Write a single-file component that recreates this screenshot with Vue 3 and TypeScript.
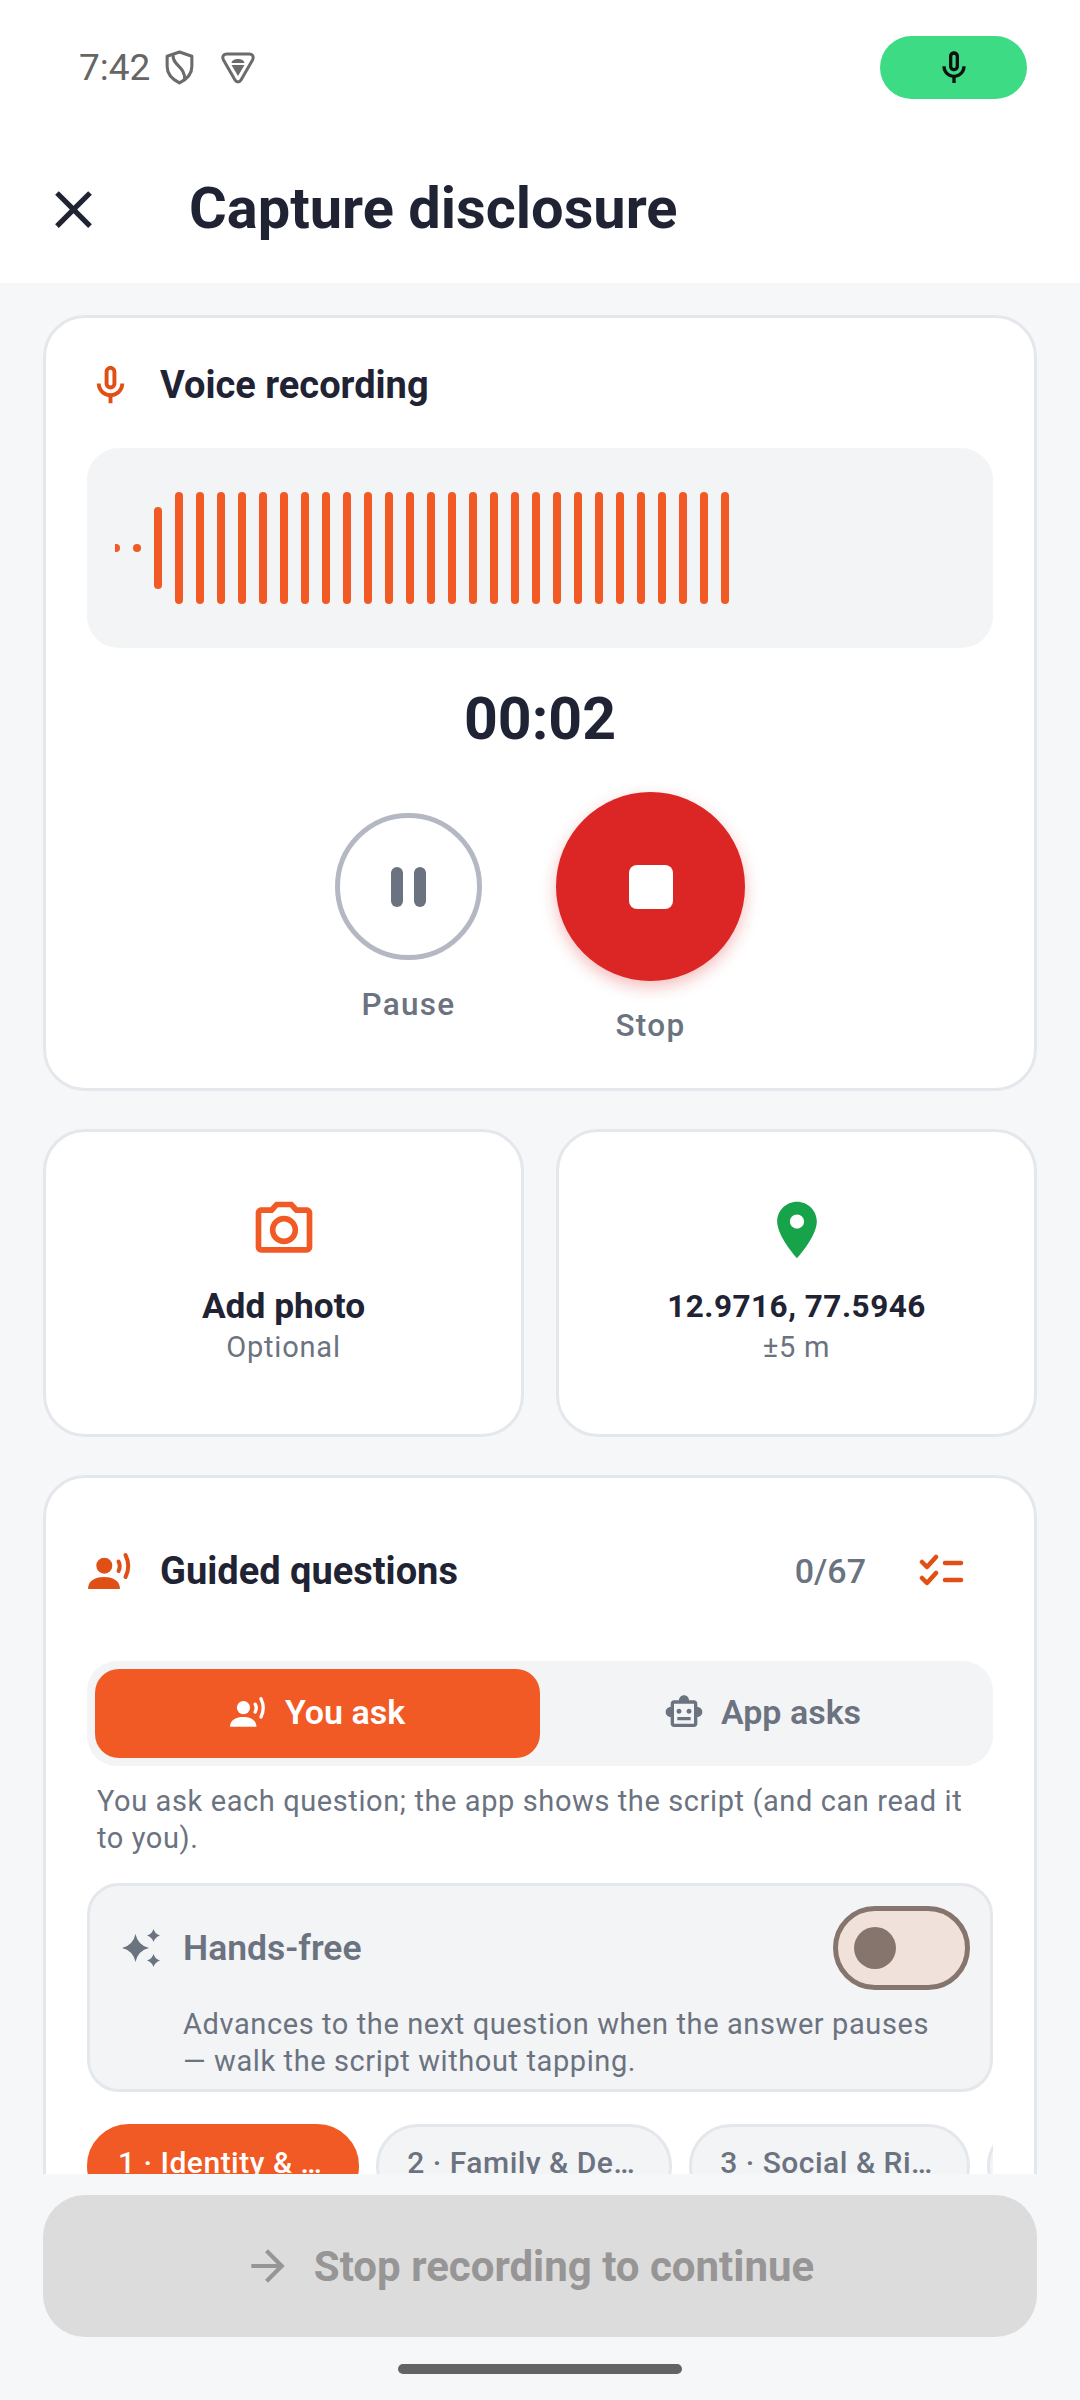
<script setup lang="ts">
// waveform: 2 quiet samples, one ramping up, then full level
const bars = [8, 8, 82, ...Array(27).fill(112)]
const chips = ['1 · Identity & …', '2 · Family & De…', '3 · Social & Ri…', '4']
const micPath = 'M12 14c1.660 0 3-1.340 3-3V5c0-1.660-1.340-3-3-3S9 3.340 9 5v6c0 1.660 1.340 3 3 3zm-1-9c0-.55.45-1 1-1s1 .45 1 1v6c0 .55-.45 1-1 1s-1-.45-1-1V5zm6 6c0 2.760-2.240 5-5 5s-5-2.240-5-5H5c0 3.530 2.610 6.430 6 6.920V21h2v-3.080c3.390-.49 6-3.390 6-6.920h-2z'
</script>

<template>
  <div class="screen">
    <div class="status-bar">
      <span class="time">7:42</span>
      <svg class="st-shield" viewBox="0 0 28 34" fill="none" stroke="#6b6b6b" stroke-width="3">
        <path d="M14 2 L26 6 V16 C26 24 20 29 14 32 C8 29 2 24 2 16 V6 Z" stroke-linejoin="round" />
        <path d="M8 5 C6 14 20 16 19 29" />
      </svg>
      <svg class="st-vpn" viewBox="0 0 34 32" fill="none">
        <path d="M6 2 H28 C32 2 33 5 31.500 8 L20 28 C18.500 30.500 15.500 30.500 14 28 L2.500 8 C1 5 2 2 6 2 Z" stroke="#6b6b6b" stroke-width="3" />
        <path d="M10.500 11 C11 5.500 23 5.500 23.500 11 Z M10.500 13 H23.500 L17 24 Z" fill="#6b6b6b" />
      </svg>
      <div class="mic-pill">
        <svg viewBox="0 0 24 24" class="pill-icon"><path fill="#111" :d="micPath" /></svg>
      </div>
    </div>

    <header class="app-bar">
      <svg class="close" viewBox="0 0 24 24"><path d="M19 6.410 17.590 5 12 10.590 6.410 5 5 6.410 10.590 12 5 17.590 6.410 19 12 13.410 17.590 19 19 17.590 13.410 12z" fill="#1f2333" /></svg>
      <h1>Capture disclosure</h1>
    </header>

    <main class="content">
      <section class="card voice">
        <div class="card-head">
          <svg viewBox="0 0 24 24" class="head-icon"><path fill="#e04f16" :d="micPath" /></svg>
          <span class="card-title">Voice recording</span>
        </div>
        <div class="wave">
          <div class="wave-inner">
            <span v-for="(h, i) in bars" :key="i" class="bar" :style="{ height: h + 'px' }"></span>
          </div>
        </div>
        <div class="timer">00:02</div>
        <div class="controls">
          <div class="control">
            <button class="pause"><span></span><span></span></button>
            <span class="control-label">Pause</span>
          </div>
          <div class="control">
            <button class="stop"><span></span></button>
            <span class="control-label">Stop</span>
          </div>
        </div>
      </section>

      <div class="tiles">
        <div class="card tile">
          <svg viewBox="0 0 24 24" class="tile-icon"><path fill="#f15a24" d="M20 4h-3.170L15 2H9L7.170 4H4c-1.100 0-2 .9-2 2v12c0 1.100.9 2 2 2h16c1.100 0 2-.9 2-2V6c0-1.100-.9-2-2-2zm0 14H4V6h4.050l1.830-2h4.240l1.830 2H20v12zM12 7c-2.760 0-5 2.240-5 5s2.240 5 5 5 5-2.240 5-5-2.240-5-5-5zm0 8c-1.650 0-3-1.350-3-3s1.350-3 3-3 3 1.350 3 3-1.350 3-3 3z" /></svg>
          <span class="tile-title">Add photo</span>
          <span class="tile-sub">Optional</span>
        </div>
        <div class="card tile">
          <svg viewBox="0 0 24 24" class="tile-icon"><path fill="#16a34a" d="M12 2C8.130 2 5 5.130 5 9c0 5.250 7 13 7 13s7-7.750 7-13c0-3.870-3.130-7-7-7zm0 9.500c-1.380 0-2.500-1.120-2.500-2.500s1.120-2.500 2.500-2.500 2.500 1.120 2.500 2.500-1.120 2.500-2.500 2.500z" /></svg>
          <span class="tile-coords">12.9716, 77.5946</span>
          <span class="tile-sub">±5 m</span>
        </div>
      </div>

      <section class="card guided">
        <div class="guided-head">
          <svg viewBox="0 0 46 38" class="guided-icon">
            <circle cx="16.300" cy="13.700" r="8" fill="currentColor" />
            <path d="M0 37 C0 28 8 25 16 25 C24 25 32 28 32 37 Z" fill="currentColor" />
            <path d="M30.500 9.500 Q33 14 30.500 19 M37.500 3 Q43 14 37.500 25" fill="none" stroke="currentColor" stroke-width="4" stroke-linecap="round" />
          </svg>
          <span class="card-title guided-title">Guided questions</span>
          <span class="count">0/67</span>
          <svg viewBox="0 0 46 36" class="check-icon" fill="none" stroke="#e04f16" stroke-width="4.500" stroke-linecap="round" stroke-linejoin="round">
            <path d="M3 9 L8 14 L17 4 M3 25 L8 30 L17 20 M26 10 H42 M26 27 H42" />
          </svg>
        </div>

        <div class="segments">
          <div class="segment active">
            <svg viewBox="0 0 46 38" class="seg-voice">
              <circle cx="16.300" cy="13.700" r="8" fill="currentColor" />
              <path d="M0 37 C0 28 8 25 16 25 C24 25 32 28 32 37 Z" fill="currentColor" />
              <path d="M30.500 9.500 Q33 14 30.500 19 M37.500 3 Q43 14 37.500 25" fill="none" stroke="currentColor" stroke-width="4" stroke-linecap="round" />
            </svg>
            You ask
          </div>
          <div class="segment">
            <svg viewBox="0 0 24 24" class="seg-icon"><path fill="#6b7280" d="M20 9V7c0-1.100-.9-2-2-2h-3c0-1.660-1.340-3-3-3S9 3.340 9 5H6c-1.100 0-2 .9-2 2v2c-1.660 0-3 1.340-3 3s1.340 3 3 3v4c0 1.100.9 2 2 2h12c1.100 0 2-.9 2-2v-4c1.660 0 3-1.340 3-3s-1.340-3-3-3zm-2 10H6V7h12v12zm-9-6c-.83 0-1.500-.67-1.500-1.500S8.170 10 9 10s1.500.67 1.500 1.500S9.830 13 9 13zm7.500-1.500c0 .83-.67 1.500-1.500 1.500s-1.500-.67-1.500-1.500.67-1.500 1.500-1.500 1.500.67 1.500 1.500zM8 15h8v2H8v-2z" /></svg>
            App asks
          </div>
        </div>
        <p class="hint">You ask each question; the app shows the script (and can read it to you).</p>

        <div class="hands-free">
          <div class="hf-row">
            <svg viewBox="0 0 42 42" class="hf-icon">
              <path fill="#6b7280" d="M13.500 7 Q16 18.500 27 21 Q16 23.500 13.500 35 Q11 23.500 0 21 Q11 18.500 13.500 7Z M31.500 2 Q33 7 38 8.500 Q33 10 31.500 15 Q30 10 25 8.500 Q30 7 31.500 2Z M31.500 27 Q33 32 38 33.500 Q33 35 31.500 40 Q30 35 25 33.500 Q30 32 31.500 27Z" />
            </svg>
            <span class="hf-title">Hands-free</span>
            <div class="toggle"><span class="thumb"></span></div>
          </div>
          <p class="hf-desc">Advances to the next question when the answer pauses — walk the script without tapping.</p>
        </div>

        <div class="chips">
          <span v-for="(c, i) in chips" :key="c" class="chip" :class="{ on: i === 0 }">{{ c }}</span>
        </div>
      </section>
    </main>

    <footer class="footer">
      <div class="continue">
        <svg viewBox="0 0 24 24" class="arrow"><path fill="#979595" d="M12 4l-1.410 1.410L16.170 11H4v2h12.170l-5.580 5.590L12 20l8-8z" /></svg>
        Stop recording to continue
      </div>
      <div class="home-bar"></div>
    </footer>
  </div>
</template>

<style scoped>
.screen {
  width: 1080px;
  height: 2400px;
  display: flex;
  flex-direction: column;
  overflow: hidden;
  background: #f6f7f9;
  font-family: Roboto, "Liberation Sans", sans-serif;
  color: #1f2333;
}

.status-bar {
  height: 135px;
  flex: none;
  display: flex;
  align-items: center;
  padding: 0 53px 0 79px;
  background: #fff;
  box-sizing: border-box;
}

.time {
  font-size: 37px;
  color: #666;
}

.st-shield {
  width: 29px;
  height: 35px;
  margin-left: 15px;
}

.st-vpn {
  width: 34px;
  height: 32px;
  margin-left: 27px;
}

.mic-pill {
  margin-left: auto;
  width: 147px;
  height: 63px;
  border-radius: 32px;
  background: #3ddc84;
  display: flex;
  align-items: center;
  justify-content: center;
}

.pill-icon {
  width: 40px;
  height: 40px;
}

.app-bar {
  height: 148px;
  flex: none;
  display: flex;
  align-items: center;
  background: #fff;
  padding-left: 42px;
  box-sizing: border-box;
}

.close {
  width: 63px;
  height: 63px;
}

h1 {
  margin: 0 0 2px 84px;
  font-size: 57.750px;
  font-weight: 700;
}

.content {
  flex: 1;
  min-height: 0;
  overflow: hidden;
  padding: 32px 43px 0;
  box-sizing: border-box;
}

.card {
  background: #fff;
  border: 3px solid #e4e7ec;
  border-radius: 42px;
  box-sizing: border-box;
}

.voice {
  height: 776px;
  padding: 0 41px;
}

.card-head {
  height: 130px;
  padding-top: 4px;
  box-sizing: border-box;
  display: flex;
  align-items: center;
}

.head-icon {
  width: 47px;
  height: 47px;
}

.card-title {
  font-size: 38px;
  font-weight: 700;
  margin-left: 26px;
}

.wave {
  height: 200px;
  border-radius: 32px;
  background: #f3f4f6;
  padding: 0 28px;
  display: flex;
  align-items: center;
}

.wave-inner {
  flex: 1;
  overflow: hidden;
  display: flex;
  align-items: center;
  gap: 13.125px;
  height: 112px;
}

.bar {
  flex: none;
  width: 7.875px;
  border-radius: 4px;
  background: #f15a24;
}

.bar:first-child {
  margin-left: -3px;
}

.timer {
  margin-top: 38px;
  text-align: center;
  font-size: 59px;
  font-weight: 700;
  line-height: 66px;
}

.controls {
  display: flex;
  justify-content: center;
  align-items: center;
  gap: 74px;
  margin-top: 40px;
}

.control {
  display: flex;
  flex-direction: column;
  align-items: center;
  gap: 26px;
}

.control-label {
  font-size: 31.500px;
  font-weight: 500;
  letter-spacing: 1.300px;
  color: #6b7280;
  line-height: 38px;
}

button {
  padding: 0;
  border-radius: 50%;
  display: flex;
  align-items: center;
  justify-content: center;
}

.pause {
  width: 147px;
  height: 147px;
  border: 5px solid #b4b8c2;
  background: #fff;
  gap: 11px;
}

.pause span {
  width: 12px;
  height: 40px;
  border-radius: 6px;
  background: #6b7280;
}

.stop {
  width: 189px;
  height: 189px;
  border: none;
  background: #dc2626;
  box-shadow: 0 6px 16px rgba(220, 38, 38, 0.3);
}

.stop span {
  width: 44px;
  height: 44px;
  border-radius: 8px;
  background: #fff;
}

.tiles {
  display: grid;
  grid-template-columns: 1fr 1fr;
  gap: 32px;
  margin-top: 38px;
}

.tile {
  height: 308px;
  display: flex;
  flex-direction: column;
  align-items: center;
  padding-top: 64px;
}

.tile-icon {
  width: 68px;
  height: 68px;
}

.tile-title {
  margin-top: 22px;
  font-size: 35.300px;
  font-weight: 700;
  line-height: 41px;
}

.tile-coords {
  margin-top: 23px;
  font-size: 31.500px;
  font-weight: 700;
  line-height: 40px;
  letter-spacing: 0.500px;
}

.tile-sub {
  font-size: 29px;
  letter-spacing: 0.800px;
  color: #6b7280;
  line-height: 40px;
}

.guided {
  margin-top: 38px;
  padding: 0 41px;
  height: 800px;
}

.guided-head {
  height: 183px;
  padding-top: 3px;
  box-sizing: border-box;
  display: flex;
  align-items: center;
  color: #e04f16;
}

.guided-title {
  color: #1f2333;
  margin-left: 26px;
}

.guided-icon {
  width: 46px;
  height: 38px;
  margin-left: 1px;
}

.count {
  margin-left: auto;
  font-size: 34px;
  font-weight: 500;
  color: #6b7280;
}

.check-icon {
  width: 46px;
  height: 36px;
  margin: 0 28px 0 53px;
}

.segments {
  display: flex;
  height: 105px;
  padding: 8px;
  border-radius: 30px;
  background: #f3f4f6;
  box-sizing: border-box;
}

.segment {
  flex: 1;
  display: flex;
  align-items: center;
  justify-content: center;
  gap: 17px;
  padding-bottom: 3px;
  box-sizing: border-box;
  border-radius: 24px;
  font-size: 34px;
  font-weight: 600;
  color: #6b7280;
}

.segment.active {
  background: #f15a24;
  color: #fff;
}

.seg-icon {
  width: 40px;
  height: 40px;
}

.seg-voice {
  width: 38px;
  height: 32px;
}

.hint {
  margin: 17px 10px 0;
  font-size: 29px;
  line-height: 37px;
  color: #6b7280;
  letter-spacing: 0.600px;
}

.hands-free {
  margin-top: 26px;
  height: 209px;
  border: 3px solid #e4e7ec;
  border-radius: 32px;
  background: #f3f4f6;
  box-sizing: border-box;
  padding: 20px 20px 0 32px;
}

.hf-row {
  display: flex;
  align-items: center;
  height: 84px;
}

.hf-icon {
  width: 42px;
  height: 42px;
}

.hf-title {
  margin-left: 19px;
  font-size: 35.500px;
  font-weight: 600;
  color: #6b7280;
}

.toggle {
  margin-left: auto;
  width: 137px;
  height: 84px;
  border: 5px solid #85756d;
  border-radius: 42px;
  background: #f0e1da;
  box-sizing: border-box;
  display: flex;
  align-items: center;
  padding-left: 16px;
}

.thumb {
  width: 42px;
  height: 42px;
  border-radius: 50%;
  background: #85756d;
}

.hf-desc {
  margin: 16px 20px 0 61px;
  font-size: 29px;
  line-height: 37px;
  color: #6b7280;
  letter-spacing: 0.600px;
}

.chips {
  display: flex;
  gap: 17px;
  margin-top: 32px;
  overflow: hidden;
}

.chip {
  flex: none;
  height: 84px;
  padding: 0 34px 0 28px;
  border: 3px solid #e4e7ec;
  border-radius: 42px;
  background: #f3f4f6;
  box-sizing: border-box;
  font-size: 30px;
  font-weight: 500;
  letter-spacing: 0.500px;
  line-height: 72px;
  color: #6b7280;
}

.chip.on {
  background: #f15a24;
  border-color: #f15a24;
  color: #fff;
}

.footer {
  height: 226px;
  flex: none;
  padding: 21px 43px 0;
  box-sizing: border-box;
  background: #f6f7f9;
}

.continue {
  height: 142px;
  padding-right: 23px;
  box-sizing: border-box;
  border-radius: 42px;
  background: #dcdcdc;
  display: flex;
  align-items: center;
  justify-content: center;
  gap: 21px;
  font-size: 42px;
  font-weight: 700;
  color: #979595;
}

.arrow {
  width: 50px;
  height: 50px;
}

.home-bar {
  width: 284px;
  height: 10px;
  margin: 27px auto 0;
  border-radius: 5px;
  background: #636363;
}
</style>

<style>
body {
  margin: 0;
}
</style>
